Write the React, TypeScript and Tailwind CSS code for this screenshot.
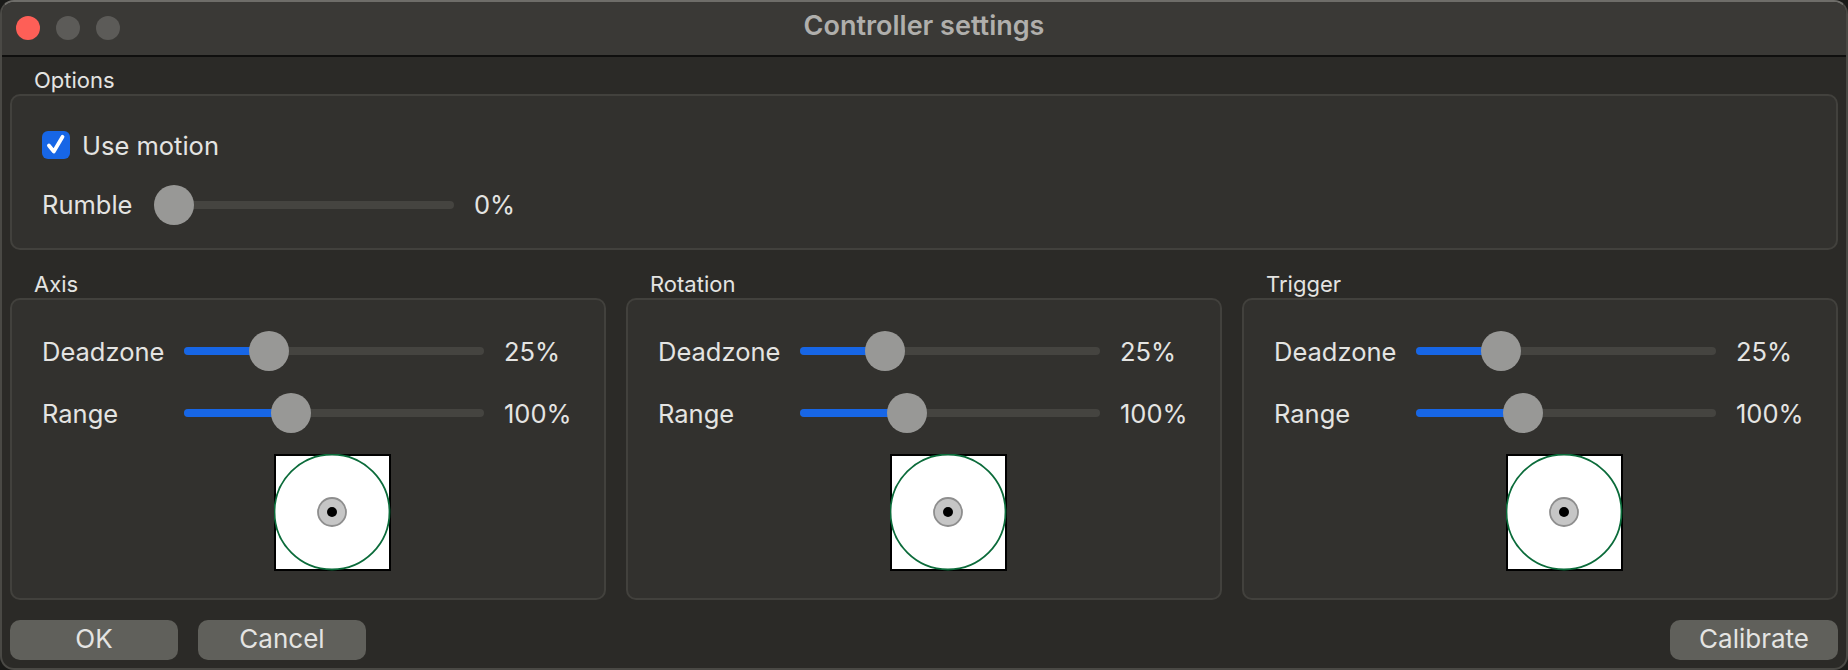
import React from "react";

function Slider({ thumb, fill }: { thumb: number; fill: boolean }) {
  return (
    <div className="relative h-[40px] w-[300px] shrink-0">
      <div className="absolute left-0 right-0 top-[16px] h-[8px] rounded-full bg-[#454440]" />
      {fill && <div className="absolute left-0 top-[16px] h-[8px] rounded-l-full bg-[#1766e6]" style={{ width: thumb + 20 }} />}
      <div className="absolute top-0 h-[40px] w-[40px] rounded-full bg-[#989896]" style={{ left: thumb }} />
    </div>
  );
}

function Row({ label, thumb, value }: { label: string; thumb: number; value: string }) {
  return (
    <div className="flex h-[40px] items-center">
      <span className="w-[142px] shrink-0 pt-[3px]">{label}</span>
      <Slider thumb={thumb} fill />
      <span className="ml-[20px] pt-[3px]">{value}</span>
    </div>
  );
}

function Pad() {
  return (
    <svg width="117" height="117" viewBox="0 0 117 117" className="block">
      <rect x="1" y="1" width="115" height="115" fill="#ffffff" stroke="#000000" strokeWidth="2" />
      <circle cx="58" cy="58" r="57.5" fill="#ffffff" stroke="#0b6b3a" strokeWidth="1.8" />
      <circle cx="58" cy="58" r="14" fill="#c6c6c6" stroke="#8e8e8e" strokeWidth="1.8" />
      <circle cx="58" cy="58" r="5" fill="#000000" />
    </svg>
  );
}

function Group({ title }: { title: string }) {
  return (
    <section className="flex w-[596px] flex-col">
      <h2 className="h-[28px] pl-[24px] text-[22px] leading-[28px] font-normal">{title}</h2>
      <div className="flex h-[302px] flex-col rounded-[10px] border-2 border-[#42413d] bg-[#32312e] pl-[30px] pt-[31px]">
        <Row label="Deadzone" thumb={65} value="25%" />
        <div className="mt-[22px]"><Row label="Range" thumb={87} value="100%" /></div>
        <div className="mt-[21px] ml-[232px]"><Pad /></div>
      </div>
    </section>
  );
}

function Btn({ children }: { children: React.ReactNode }) {
  return (
    <button className="flex h-[40px] w-[168px] items-center justify-center rounded-[10px] bg-[#60605b] pb-[3px] text-[26px] text-[#e4e4e2]">
      {children}
    </button>
  );
}

export default function App() {
  return (
    <div className="h-[670px] w-[1848px] bg-[#1a1a18]">
      <div className="flex h-[670px] w-[1848px] flex-col overflow-hidden rounded-[14px] border-x-2 border-b-2 border-t-2 border-x-[#4a4945] border-b-[#4a4945] border-t-[#6e6d69] bg-[#2b2a27] font-['Inter','Liberation_Sans',sans-serif] text-[25.5px] text-[#e4e4e2]">
        <header className="relative flex h-[55px] shrink-0 items-center justify-center border-b-2 border-[#0f0f0e] bg-[#3a3936] pb-[4px]">
          <div className="absolute left-[14px] top-[14px] flex gap-[16px]">
            <span className="h-[24px] w-[24px] rounded-full bg-[#fe5f57]" />
            <span className="h-[24px] w-[24px] rounded-full bg-[#5c5b58]" />
            <span className="h-[24px] w-[24px] rounded-full bg-[#5c5b58]" />
          </div>
          <h1 className="text-[27px] font-semibold text-[#b0afac]">Controller settings</h1>
        </header>
        <main className="flex flex-1 flex-col px-[8px]">
          <section className="mt-[9px]">
            <h2 className="h-[28px] pl-[24px] text-[22px] leading-[28px] font-normal">Options</h2>
            <div className="flex h-[156px] flex-col rounded-[10px] border-2 border-[#42413d] bg-[#32312e] pl-[30px] pt-[35px]">
              <label className="flex h-[28px] items-center gap-[12px]">
                <span className="flex h-[28px] w-[28px] items-center justify-center rounded-[6px] bg-[#1766e6]">
                  <svg width="24" height="24" viewBox="0 0 22 22" fill="none">
                    <path d="M4.5 11.5 L9 17 L17 3.5" stroke="#ffffff" strokeWidth="3.4" strokeLinecap="round" strokeLinejoin="round" />
                  </svg>
                </span>
                <span className="pt-[2px]">Use motion</span>
              </label>
              <div className="mt-[26px] flex h-[40px] items-center">
                <span className="w-[112px] shrink-0">Rumble</span>
                <Slider thumb={0} fill={false} />
                <span className="ml-[20px]">0%</span>
              </div>
            </div>
          </section>
          <div className="mt-[20px] flex gap-[20px]">
            <Group title="Axis" />
            <Group title="Rotation" />
            <Group title="Trigger" />
          </div>
          <footer className="mt-[20px] flex gap-[20px]">
            <Btn>OK</Btn>
            <Btn>Cancel</Btn>
            <div className="ml-auto"><Btn>Calibrate</Btn></div>
          </footer>
        </main>
      </div>
    </div>
  );
}
